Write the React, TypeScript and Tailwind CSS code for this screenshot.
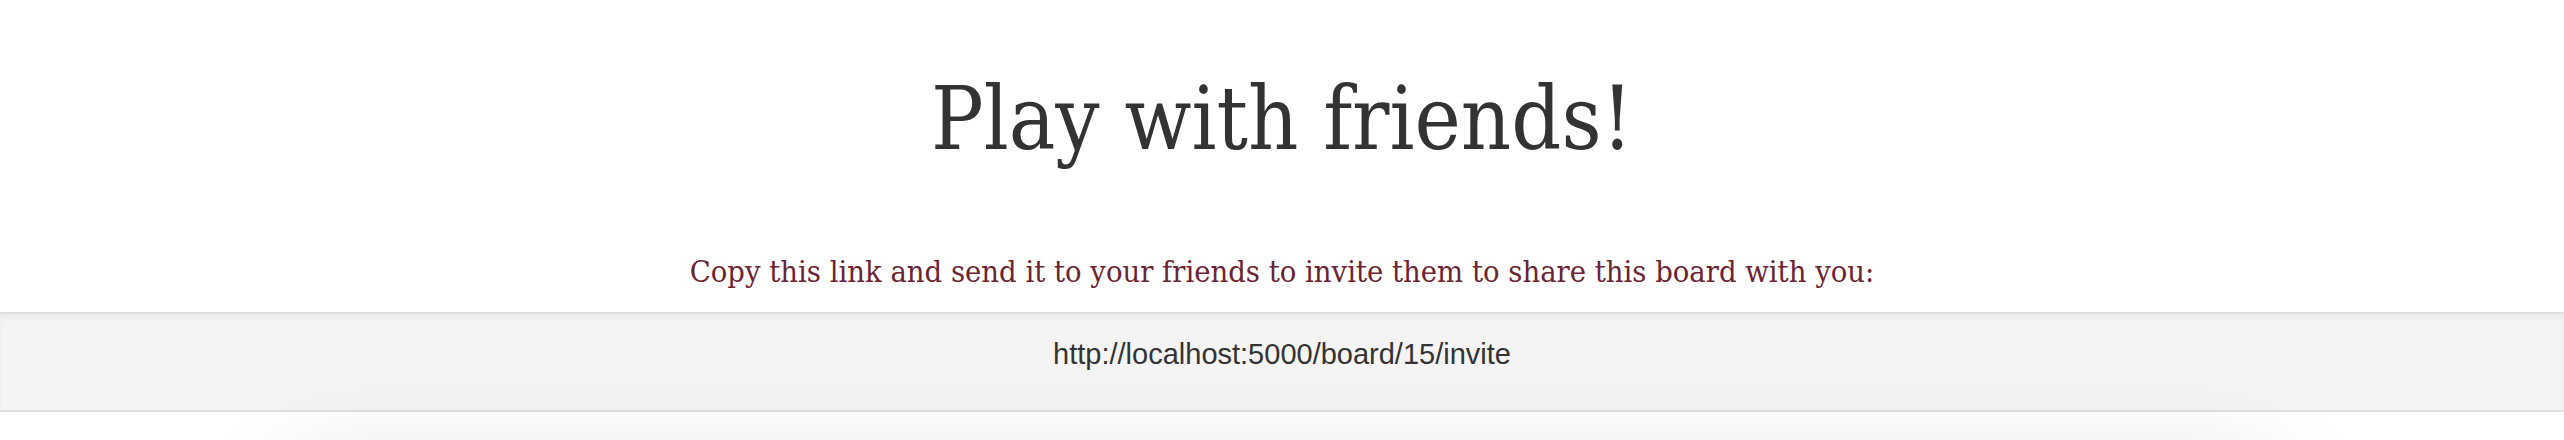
export default function App() {
  return (
    <div className="min-h-screen bg-white">
      <h1 className="pt-[76px] text-center text-[87px] leading-none font-normal text-[#333333] [font-family:'DejaVu_Serif_Condensed','DejaVu_Serif',serif] [font-stretch:condensed]">
        Play with friends!
      </h1>
      <p className="mt-[93px] text-center text-[30.6px] leading-[31px] text-[#6b2434] [font-family:'DejaVu_Serif_Condensed','DejaVu_Serif',serif] [font-stretch:condensed]">
        Copy this link and send it to your friends to invite them to share this board with you:
      </p>
      <div className="mt-[25px] h-[100px] border-y-2 border-[#e0e0e0] bg-[#f4f4f4] pt-[26px] text-center shadow-[inset_0_4px_6px_rgba(0,0,0,0.04)]">
        <span className="text-[29px] leading-none text-[#333333] [font-family:'Liberation_Sans',Arial,sans-serif]">
          http://localhost:5000/board/15/invite
        </span>
      </div>
      <div className="mx-auto mt-[45px] h-[200px] w-[2000px] rounded-[40px] bg-white shadow-[0_0_100px_rgba(0,0,0,0.1)]" />
    </div>
  );
}
